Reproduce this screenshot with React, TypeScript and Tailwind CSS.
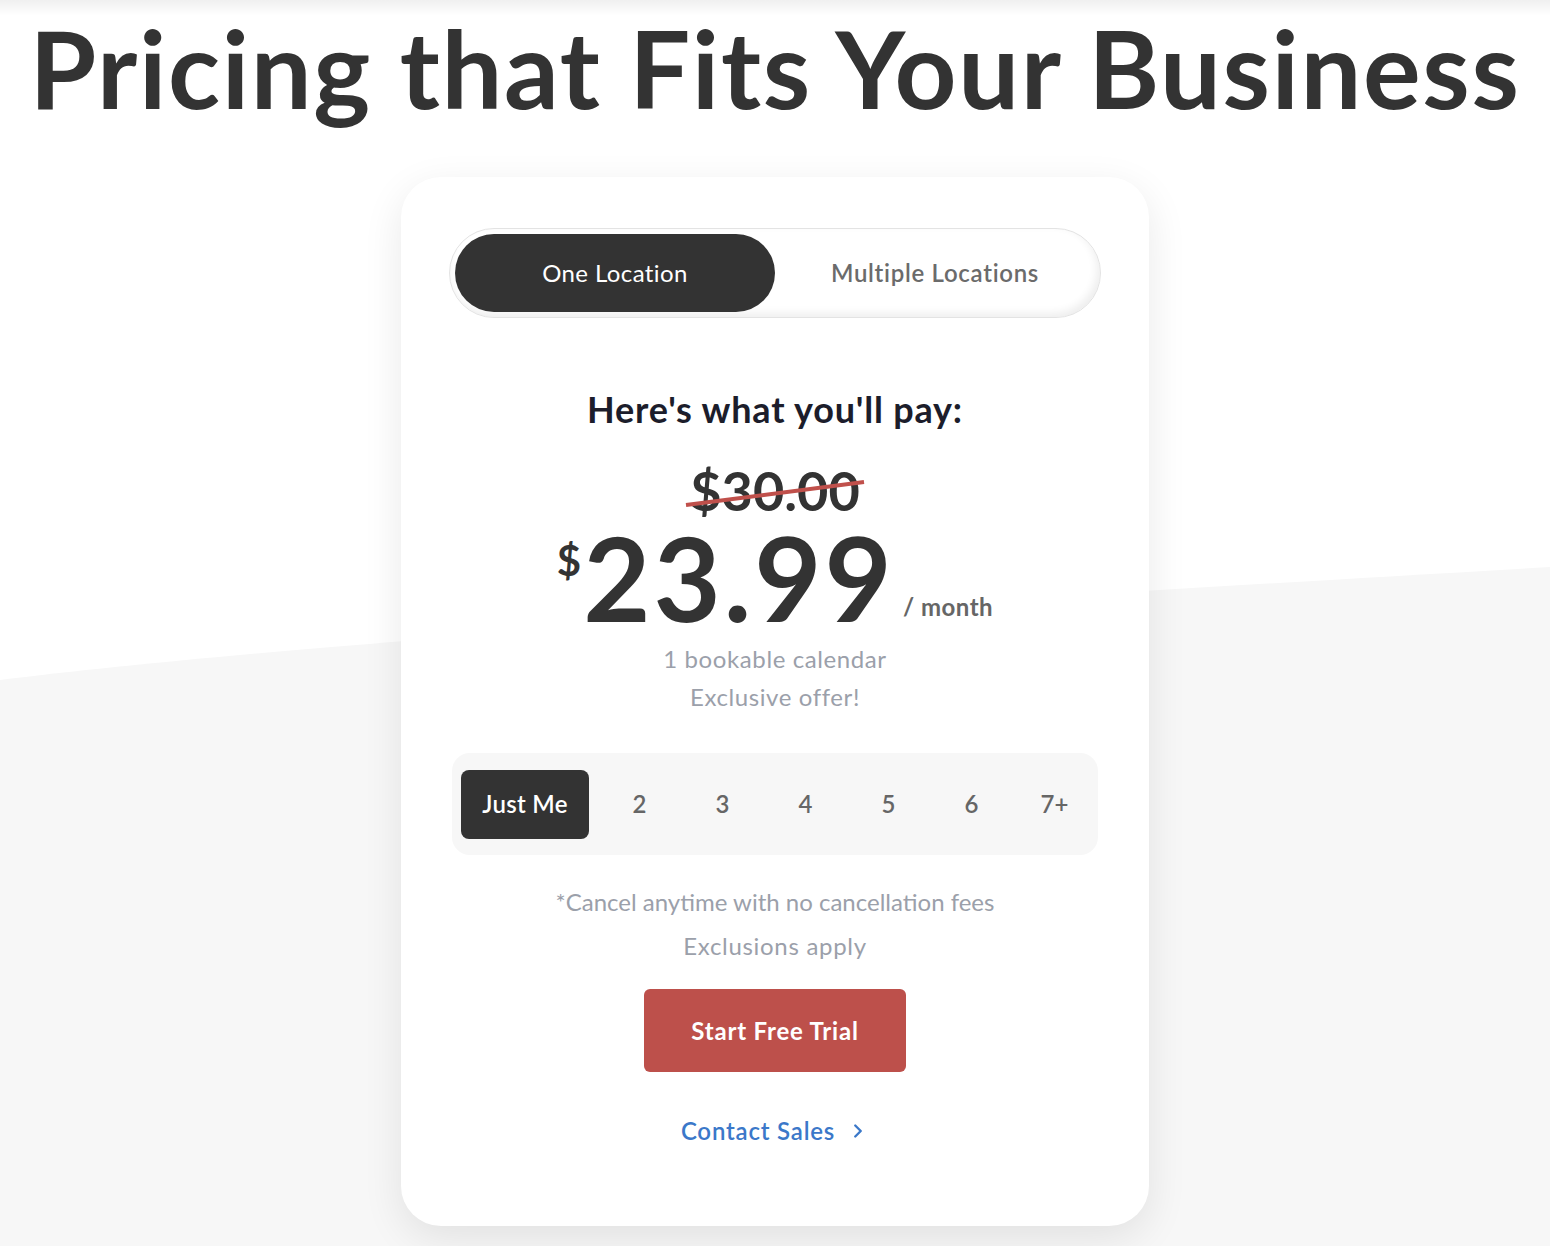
import React from "react";
import { ChevronRight } from "lucide-react";

export default function App() {
  const seats = ["2", "3", "4", "5", "6", "7+"];
  return (
    <div
      className="relative min-h-[1246px] w-full overflow-hidden bg-white"
      style={{ fontFamily: "Lato, 'Open Sans', sans-serif" }}
    >
      <svg
        className="pointer-events-none absolute inset-0 h-[1246px] w-full"
        viewBox="0 0 1550 1246"
        preserveAspectRatio="none"
      >
        <path d="M0 680 C 250 650, 600 622, 1550 567 L1550 1246 L0 1246 Z" fill="#f7f7f7" />
      </svg>
      <div className="pointer-events-none absolute inset-x-0 top-0 h-[16px] bg-gradient-to-b from-black/[0.06] to-transparent" />

      <div className="relative flex flex-col items-center">
        <h1 className="mt-[12px] text-center text-[108px] font-bold leading-[110px] tracking-[1.6px] text-[#333333]">
          Pricing that Fits Your Business
        </h1>

        <div className="mt-[55px] flex w-[748px] flex-col items-center rounded-[40px] bg-white px-[48px] pb-[75px] pt-[51px] shadow-[0_12px_40px_rgba(0,0,0,0.09)]">
          <div className="flex h-[90px] w-[652px] rounded-full border border-[#e3e3e3] bg-white p-[5px] shadow-[inset_-3px_-4px_8px_rgba(0,0,0,0.07)]">
            <div className="flex h-[78px] w-[320px] items-center justify-center rounded-full bg-[#333333] text-[24px] tracking-[0.4px] text-white">
              One Location
            </div>
            <div className="flex h-[78px] flex-1 items-center justify-center text-[24px] font-semibold tracking-[0.7px] text-[#6b6b6b]">
              Multiple Locations
            </div>
          </div>

          <div className="mt-[71px] text-[36px] font-bold leading-[40px] tracking-[0.8px] text-[#1c1d2b]">
            Here's what you'll pay:
          </div>

          <div className="relative mt-[36px] text-[54px] font-bold leading-[52px] text-[#333333]">
            $30.00
            <svg className="absolute left-[-6px] top-[12px] h-[32px] w-[186px]" viewBox="0 0 186 32">
              <line x1="2" y1="28" x2="180" y2="5" stroke="#c0504b" strokeWidth="4" />
            </svg>
          </div>

          <div className="mt-[5px] flex items-start text-[#333333]">
            <span className="mt-[14px] text-[42px] font-bold leading-[48px]">$</span>
            <span className="ml-[2px] text-[116px] font-bold leading-[112px] tracking-[3px]">23.99</span>
            <span className="ml-[8px] mt-[70px] text-[24px] font-bold leading-[30px] tracking-[0.5px] text-[#666666]">
              / month
            </span>
          </div>

          <div className="mt-[6px] text-[24px] leading-[38px] tracking-[0.6px] text-[#9ba0aa]">1 bookable calendar</div>
          <div className="text-[24px] leading-[38px] tracking-[0.6px] text-[#9ba0aa]">Exclusive offer!</div>

          <div className="mt-[37px] flex h-[102px] w-[646px] items-center rounded-[18px] bg-[#f7f7f7] pl-[9px]">
            <div className="flex h-[69px] w-[128px] items-center justify-center rounded-[8px] bg-[#333333] text-[24px] font-semibold tracking-[0.3px] text-white">
              Just Me
            </div>
            <div className="ml-[9px] flex">
              {seats.map((s) => (
                <div
                  key={s}
                  className="flex h-[69px] w-[83px] items-center justify-center text-[24px] font-semibold text-[#666666]"
                >
                  {s}
                </div>
              ))}
            </div>
          </div>

          <div className="mt-[25px] text-[24px] leading-[44px] text-[#9ba0aa]">
            *Cancel anytime with no cancellation fees
          </div>
          <div className="text-[24px] leading-[44px] tracking-[0.7px] text-[#9ba0aa]">Exclusions apply</div>

          <button className="mt-[21px] flex h-[83px] w-[262px] items-center justify-center rounded-[6px] bg-[#bd504b] text-[24px] font-bold tracking-[0.8px] text-white">
            Start Free Trial
          </button>

          <a className="mt-[39px] flex h-[40px] items-center gap-[12px] text-[24px] font-semibold tracking-[0.8px] text-[#3b78c9]">
            Contact Sales
            <ChevronRight size={22} strokeWidth={2.6} />
          </a>
        </div>
      </div>
    </div>
  );
}
